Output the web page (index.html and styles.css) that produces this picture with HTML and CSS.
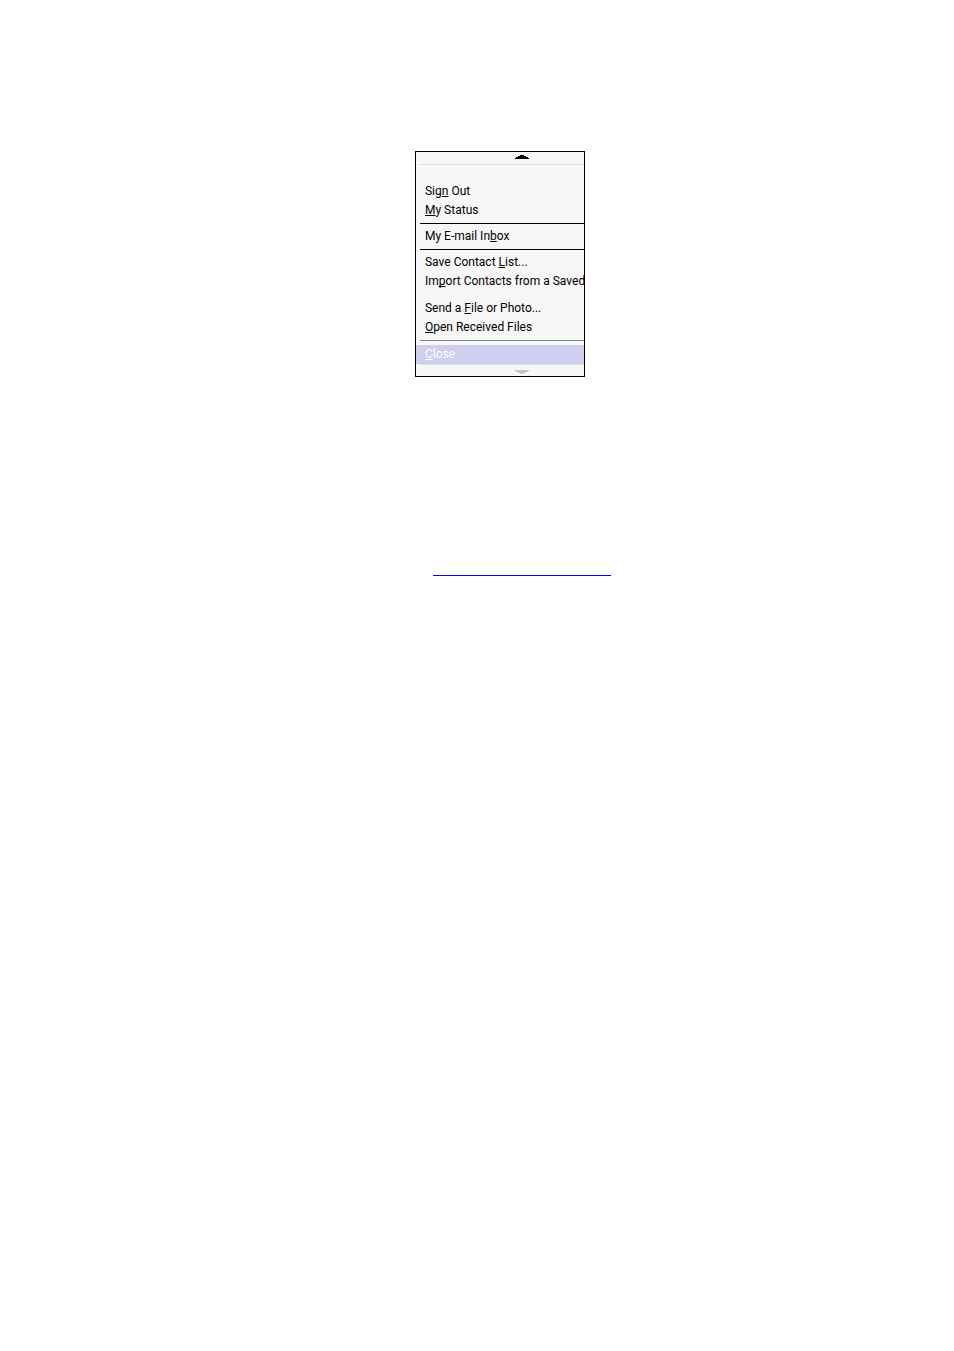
FILE: index.html
```html
<!DOCTYPE html>
<html lang="en">
<head>
<meta charset="utf-8">
<meta name="viewport" content="width=device-width, initial-scale=1">
<title>File menu</title>
<link rel="stylesheet" href="styles.css">
</head>
<body>
<main class="page">
  <nav class="menu" aria-label="File">
    <button class="scroll scroll-up" type="button" aria-label="Scroll up">
      <svg class="arrow" width="14" height="4" viewBox="0 0 14 4" shape-rendering="crispEdges"><path d="M5 0h4v1h2v1h2v1h1v1H0V3h1V2h2V1h2z"/></svg>
    </button>
    <div class="group">
      <button class="item" type="button">Sig<u>n</u> Out</button>
      <button class="item" type="button"><u>M</u>y Status</button>
    </div>
    <hr class="rule">
    <div class="group">
      <button class="item" type="button">My E-mail In<u>b</u>ox</button>
    </div>
    <hr class="rule">
    <div class="group">
      <button class="item" type="button">Save Contact <u>L</u>ist...</button>
      <button class="item" type="button">Im<u>p</u>ort Contacts from a Saved</button>
    </div>
    <hr class="rule rule-clear">
    <div class="group">
      <button class="item" type="button">Send a <u>F</u>ile or Photo...</button>
      <button class="item" type="button"><u>O</u>pen Received Files</button>
    </div>
    <hr class="rule rule-gray">
    <div class="group">
      <button class="item item-active" type="button"><u>C</u>lose</button>
    </div>
    <button class="scroll scroll-down" type="button" aria-label="Scroll down">
      <svg class="arrow" width="14" height="4" viewBox="0 0 14 4" shape-rendering="crispEdges"><path d="M0 0h14v1h-1v1h-2v1H9v1H5V3H3V2H1V1H0z"/></svg>
    </button>
  </nav>
  <hr class="link-line">
</main>
</body>
</html>
```
FILE: styles.css
```css
* {
  box-sizing: border-box;
}

body {
  margin: 0;
  background: #fff;
}

.page {
  padding: 151px 0 0 43.5%;
}

.menu {
  display: flex;
  flex-direction: column;
  width: 170px;
  overflow: hidden;
  border: 1px solid #000;
  background: #f7f7f7;
  color: #000;
  font: 400 12px/19px Roboto, "Noto Sans", sans-serif;
}

.scroll {
  display: flex;
  justify-content: center;
  margin: 0 0 0 4px;
  padding: 3px 0 0 40px;
  height: 13px;
  border: 0;
  background: none;
}

.scroll-up {
  margin-bottom: 17px;
  border-bottom: 1px solid #dedede;
  color: #000;
}

.scroll-down {
  padding-top: 5px;
  height: 12px;
  border-top: 1px solid #dedede;
  color: #c6c6c6;
}

.arrow {
  flex: none;
  fill: currentColor;
}

.group {
  display: flex;
  flex-direction: column;
}

.item {
  height: 19px;
  padding: 0 0 0 9px;
  border: 0;
  background: none;
  color: inherit;
  font: inherit;
  text-align: left;
  white-space: nowrap;
}

.item u {
  text-underline-offset: 1px;
  text-decoration-thickness: 1px;
  text-decoration-skip-ink: none;
}

.item-active {
  background: #ceceef;
  color: #fff;
}

.rule {
  width: auto;
  height: 1px;
  margin: 3px 0 3px 4px;
  border: 0;
  background: #000;
}

.rule-clear {
  margin-bottom: 4px;
  background: none;
}

.rule-gray {
  margin-bottom: 4px;
  background: #848484;
}

.link-line {
  width: 178px;
  height: 1px;
  margin: 198px 0 0 18px;
  border: 0;
  background: #00f;
}
```
